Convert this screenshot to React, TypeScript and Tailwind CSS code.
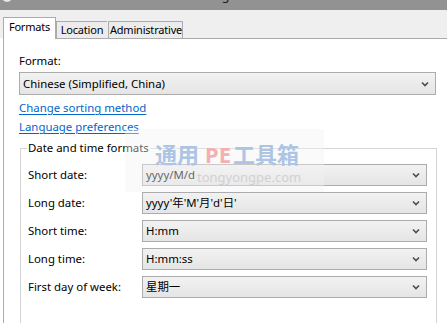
import { type ReactNode } from "react";

const font = { fontFamily: '"Noto Sans", "Noto Sans CJK SC", sans-serif' };

function Chevron() {
  return (
    <svg width="8" height="6" viewBox="0 0 8 6" className="shrink-0">
      <path d="M1 1.5 L4 4.5 L7 1.5" fill="none" stroke="#4d4d4d" strokeWidth="1.6" />
    </svg>
  );
}

function Select({ value, className }: { value: ReactNode; className?: string }) {
  return (
    <div
      className={`flex h-[22px] items-center justify-between border border-[#acacac] bg-gradient-to-b from-[#f2f2f2] to-[#e5e5e5] pl-[3px] pr-[6px] text-[11.4px] text-black ${className ?? ""}`}
    >
      <span className="whitespace-nowrap">{value}</span>
      <Chevron />
    </div>
  );
}

function Tab({ label, active, className }: { label: string; active?: boolean; className?: string }) {
  return (
    <div
      className={`${
        active
          ? "relative -mb-px h-[22px] bg-white pb-[2px]"
          : "h-[17px] bg-[#ececec]"
      } flex items-center justify-center whitespace-nowrap border border-b-0 border-[#ababab] text-[11px] tracking-[-0.2px] text-black ${className ?? ""}`}
    >
      {label}
    </div>
  );
}

const rows: { label: string; value: string }[] = [
  { label: "Short date:", value: "yyyy/M/d" },
  { label: "Long date:", value: "yyyy'年'M'月'd'日'" },
  { label: "Short time:", value: "H:mm" },
  { label: "Long time:", value: "H:mm:ss" },
  { label: "First day of week:", value: "星期一" },
];

export default function App() {
  return (
    <div className="relative h-[323px] w-[447px] overflow-hidden bg-white" style={font}>
      {/* title bar */}
      <div className="relative h-[10px] bg-[#929292]">
        <div className="absolute -top-[8px] left-[2px] size-[10px] rounded-full bg-[#e8e8e8]" />
        <div className="absolute -top-[13px] left-[206px] text-[13px] leading-[16px] text-[#1e1e1e]">Region</div>
      </div>

      {/* tab strip */}
      <div className="flex h-[28px] items-end bg-[#efefef] pl-[3px]">
        <Tab label="Formats" active className="w-[53px]" />
        <Tab label="Location" className="w-[51px] border-r-0" />
        <Tab label="Administrative" className="ml-px w-[75px] pl-px" />
      </div>

      {/* panel */}
      <div className="ml-[3px] h-[290px] border-l border-t border-[#ababab] pl-[15px] pt-[14px] text-[11.4px] leading-[16px] text-black">
        <div>Format:</div>
        <Select value="Chinese (Simplified, China)" className="mt-[3px] h-[23px] w-[417px]" />
        <div className="mt-[5px] flex flex-col items-start gap-[3px] text-[#0066cc]">
          <span className="underline underline-offset-2">Change sorting method</span>
          <span className="underline underline-offset-2">Language preferences</span>
        </div>

        <div className="relative ml-[1px] mt-[13px] h-[200px] w-[417px] border border-[#d5d5d5] pl-[7px] pt-[15px]">
          <div className="absolute -top-[9px] left-[6px] bg-white px-[1px]">Date and time formats</div>
          <div className="flex flex-col gap-[6px]">
            {rows.map((r) => (
              <div key={r.label} className="flex items-center">
                <span className="w-[114px]">{r.label}</span>
                <Select value={r.value} className="w-[285px]" />
              </div>
            ))}
          </div>
        </div>
      </div>

      {/* watermark */}
      <div className="pointer-events-none absolute left-[125px] top-[129px] h-[63px] w-[199px] bg-[#f2f2f2]/40">
        <div className="absolute left-[30px] top-[13px] flex text-[22px] font-bold leading-[24px]">
          <span className="text-[#adc4e4]">通用</span>
          <span className="ml-[6px] text-[#f4b0b0]">PE</span>
          <span className="ml-[2px] text-[#adc4e4]">工具箱</span>
        </div>
        <div className="absolute left-[72px] top-[40px] text-[13px] leading-[16px] text-[#c9c9c9]/80">tongyongpe.com</div>
      </div>
    </div>
  );
}
